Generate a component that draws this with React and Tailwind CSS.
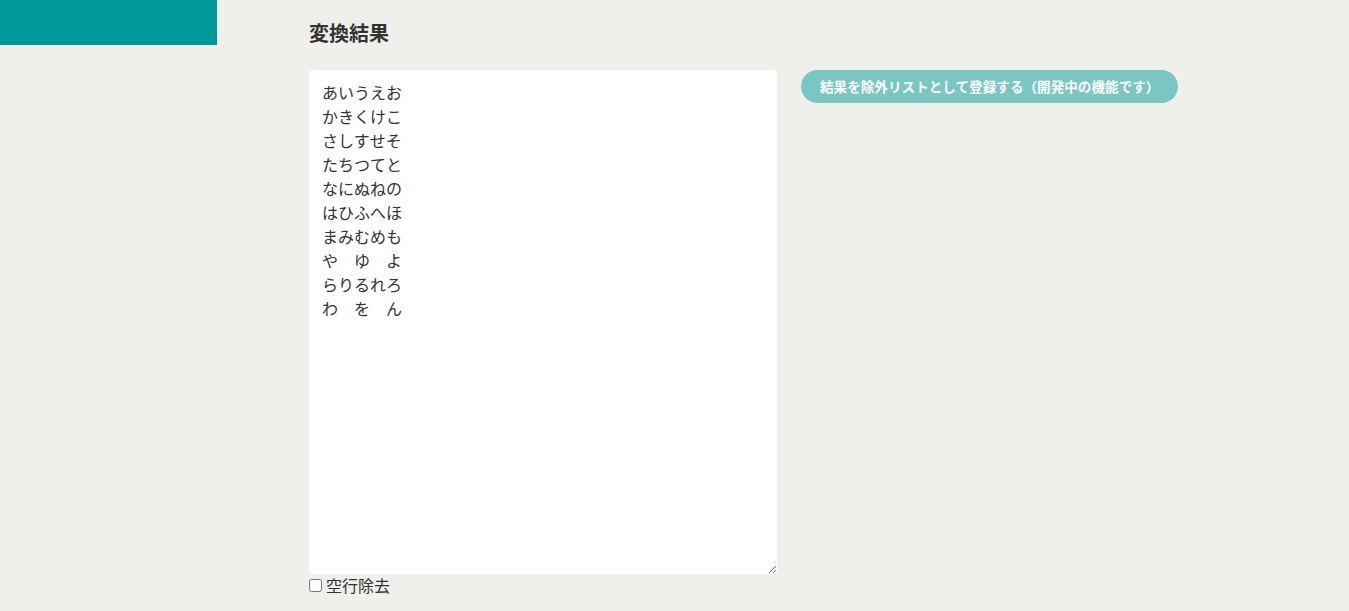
import { useState } from 'react'

const sample = [
  'あいうえお',
  'かきくけこ',
  'さしすせそ',
  'たちつてと',
  'なにぬねの',
  'はひふへほ',
  'まみむめも',
  'や　ゆ　よ',
  'らりるれろ',
  'わ　を　ん',
].join('\n')

export default function App() {
  const [text, setText] = useState(sample)
  const [removeEmpty, setRemoveEmpty] = useState(false)

  return (
    <div
      className="flex min-h-[611px] bg-[#efefeb] text-[#333333]"
      style={{ fontFamily: '"Noto Sans CJK JP", "Noto Sans", sans-serif' }}
    >
      <aside className="w-[217px] shrink-0">
        <div className="h-[45px] bg-[#009999]" />
      </aside>

      <main className="flex-1 pl-[92px] pt-[19px]">
        <h2 className="text-[20px] font-bold leading-[28px]">変換結果</h2>

        <div className="mt-[23px] flex items-start gap-6">
          <div className="w-[468px]">
            <textarea
              value={text}
              onChange={(e) => setText(e.target.value)}
              className="block h-[504px] w-full resize-y rounded bg-white px-[13px] py-[10px] text-[16px] leading-[24px] text-[#333333] outline-none"
            />
            <label className="flex items-center gap-[4px] text-[16px] leading-[22px]">
              <input
                type="checkbox"
                checked={removeEmpty}
                onChange={(e) => setRemoveEmpty(e.target.checked)}
                className="m-0 h-[13px] w-[13px]"
              />
              空行除去
            </label>
          </div>

          <button
            type="button"
            className="h-[33px] rounded-full bg-[#7ac6c2] px-[19px] text-[13.6px] font-bold text-white"
          >
            結果を除外リストとして登録する（開発中の機能です）
          </button>
        </div>
      </main>
    </div>
  )
}
